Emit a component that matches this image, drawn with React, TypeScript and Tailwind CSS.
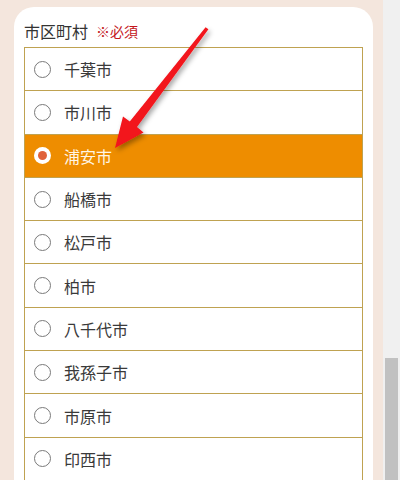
const cities = [
  "千葉市",
  "市川市",
  "浦安市",
  "船橋市",
  "松戸市",
  "柏市",
  "八千代市",
  "我孫子市",
  "市原市",
  "印西市",
];

function Radio({ checked }: { checked: boolean }) {
  if (checked) {
    return (
      <span className="flex h-[17px] w-[17px] items-center justify-center rounded-full bg-white">
        <span className="h-[9px] w-[9px] rounded-full bg-[#e0623a]" />
      </span>
    );
  }
  return <span className="h-[17px] w-[17px] rounded-full border border-[#7a7a7a] bg-white" />;
}

function Arrow() {
  return (
    <svg
      className="pointer-events-none absolute left-0 top-0"
      width="400"
      height="480"
      viewBox="0 0 400 480"
    >
      <defs>
        <filter id="sh" x="-20%" y="-20%" width="140%" height="140%">
          <feDropShadow dx="2" dy="3" stdDeviation="2.5" floodColor="#000" floodOpacity="0.35" />
        </filter>
      </defs>
      <polygon
        filter="url(#sh)"
        fill="#f2141c"
        points="205.6,27.2 208.4,29.2 137,127 143.5,132.5 115,148 123,116.5 129.8,121.6"
      />
    </svg>
  );
}

export default function App() {
  return (
    <div
      className="relative flex h-[480px] w-[400px] overflow-hidden bg-[#f4e6dd]"
      style={{ fontFamily: '"Noto Sans CJK JP", "Noto Sans", sans-serif' }}
    >
      <div className="w-[383px] pl-[14px] pr-[10px] pt-[7px]">
        <div className="h-[480px] rounded-t-[20px] bg-white px-[10px] pt-[8px]">
          <div className="flex h-[32px] items-center gap-[8px] text-[16px] leading-none text-[#333]">
            <span>市区町村</span>
            <span className="text-[14px] text-[#c4161c]">※必須</span>
          </div>
          <div className="border-x border-t border-[#bfa251]">
            {cities.map((c) => {
              const sel = c === "浦安市";
              return (
                <div
                  key={c}
                  className={
                    "flex h-[43.3px] items-center gap-[13px] border-b border-[#bfa251] pl-[9px] text-[16px] " +
                    (sel ? "bg-[#ee8d00] text-[#fff6e6]" : "bg-white text-[#3a3a3a]")
                  }
                >
                  <Radio checked={sel} />
                  <span>{c}</span>
                </div>
              );
            })}
          </div>
        </div>
      </div>
      <div className="flex w-[17px] flex-col bg-[#f0f0f0]">
        <div className="h-[358px]" />
        <div className="mx-[2px] flex-1 bg-[#c1c1c1]" />
      </div>
      <Arrow />
    </div>
  );
}
